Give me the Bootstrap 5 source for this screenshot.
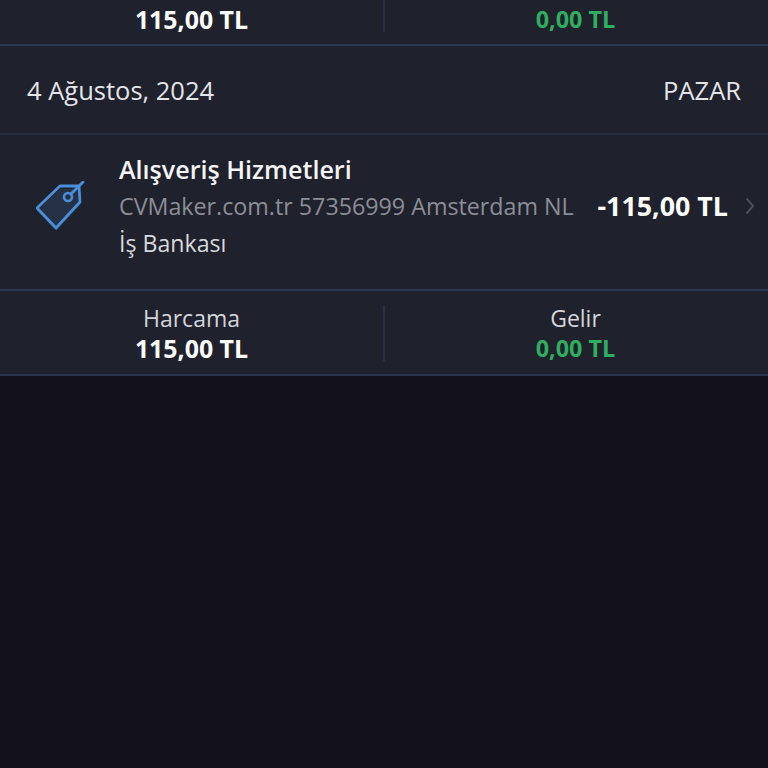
<!DOCTYPE html>
<html lang="tr">
<head>
<meta charset="utf-8">
<title>Harcamalar</title>
<link href="https://cdn.jsdelivr.net/npm/bootstrap@5.3.0/dist/css/bootstrap.min.css" rel="stylesheet">
<style>
html,body{height:100%;}
body{background:#12111c;font-family:"Open Sans","Noto Sans",sans-serif;color:#e8e9ed;overflow:hidden;}
.tx-panel{background:#1f212c;}
.tx-line{border-bottom:2px solid #29384f;}
.tx-line-soft{border-bottom:2px solid #2a2f40;}
.tx-sum-cut{height:46px;}
.tx-sum-cut .tx-cell{height:32px;}
.tx-sum-cut .tx-val{line-height:39px;}
.tx-sum{height:85px;padding-top:14px;}
.tx-cell{text-align:center;height:56px;}
.tx-cell-l{border-right:2px solid #2a3145;width:385px;}
.tx-cell-r{flex:1;padding-right:2px;}
.tx-lab{font-size:23px;line-height:26px;color:#d4d5da;}
.tx-val{font-size:24.9px;font-weight:700;line-height:34px;color:#fff;}
.tx-val-g{font-size:23.4px;color:#2fae5f;}
.tx-date{height:89px;padding:2px 27px 0;font-size:25.5px;color:#e4e5ea;}
.tx-item{height:156px;padding-bottom:12px;}
.tx-ico{width:119px;flex:none;padding-left:36px;}
.tx-main{flex:1;min-width:0;}
.tx-title{font-size:25.1px;font-weight:600;line-height:37px;color:#f4f4f6;}
.tx-sub{font-size:23.25px;line-height:37px;color:#8c8e97;white-space:nowrap;}
.tx-bank{font-size:23.15px;line-height:36px;color:#d8d9de;}
.tx-amt{font-size:26.8px;font-weight:700;color:#fff;white-space:nowrap;margin-right:17px;}
.tx-chev{width:23px;flex:none;}
</style>
</head>
<body>
<div class="tx-panel">
  <div class="tx-sum-cut tx-line d-flex">
    <div class="tx-cell tx-cell-l tx-val">115,00 TL</div>
    <div class="tx-cell tx-cell-r tx-val tx-val-g">0,00 TL</div>
  </div>
  <div class="tx-date tx-line-soft d-flex align-items-center justify-content-between">
    <span>4 Ağustos, 2024</span><span>PAZAR</span>
  </div>
  <div class="tx-item tx-line d-flex align-items-center">
    <div class="tx-ico">
      <svg width="50" height="50" viewBox="0 0 50 50" fill="none" class="d-block">
        <path d="M1 27 L24 5 L43 5 L44 21 L20 47 Z" fill="#2b3c58" fill-opacity=".6" transform="translate(0,3)"/>
        <path d="M1 27 L24 5 L43 5 L44 21 L20 47 Z" stroke="#4a8fdc" stroke-width="2.8" stroke-linejoin="round"/>
        <circle cx="32" cy="16" r="4" stroke="#4a8fdc" stroke-width="2.6"/>
        <path d="M35 13 L47 1" stroke="#4a8fdc" stroke-width="2.8" stroke-linecap="round"/>
      </svg>
    </div>
    <div class="tx-main">
      <div class="tx-title">Alışveriş Hizmetleri</div>
      <div class="tx-sub">CVMaker.com.tr 57356999 Amsterdam NL</div>
      <div class="tx-bank">İş Bankası</div>
    </div>
    <div class="tx-amt">-115,00 TL</div>
    <div class="tx-chev">
      <svg width="10" height="18" viewBox="0 0 10 18" fill="none" class="d-block"><path d="M2 2 L8 9 L2 16" stroke="#4b4e5a" stroke-width="2" stroke-linecap="round" stroke-linejoin="round"/></svg>
    </div>
  </div>
  <div class="tx-sum tx-line d-flex">
    <div class="tx-cell tx-cell-l"><div class="tx-lab">Harcama</div><div class="tx-val">115,00 TL</div></div>
    <div class="tx-cell tx-cell-r"><div class="tx-lab">Gelir</div><div class="tx-val tx-val-g">0,00 TL</div></div>
  </div>
</div>
</body>
</html>
